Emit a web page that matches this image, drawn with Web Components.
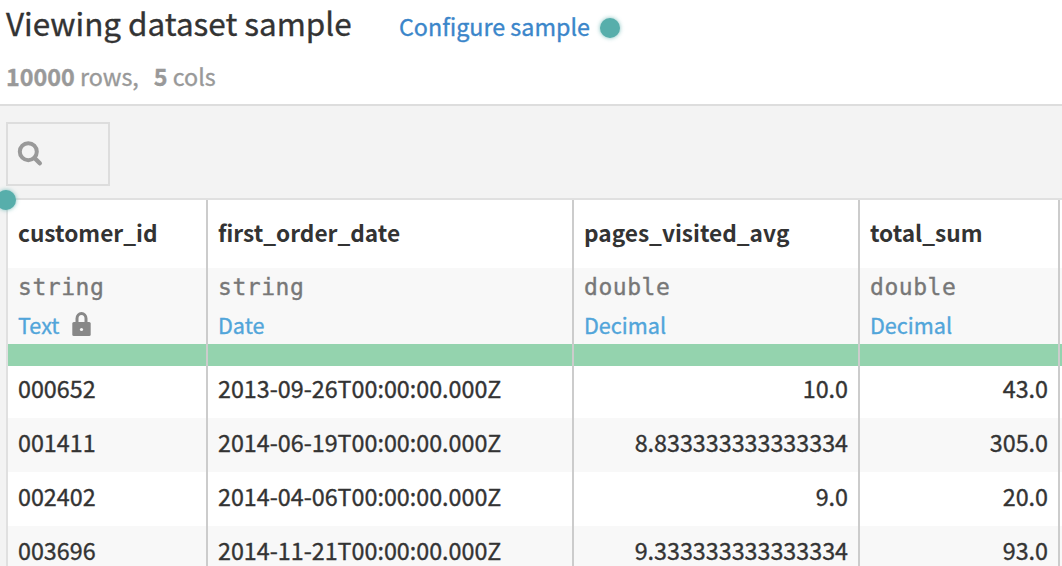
<!DOCTYPE html>
<html lang="en">
<head>
<meta charset="utf-8">
<title>Dataset sample</title>
<style>
html, body { margin: 0; height: 100%; overflow: hidden; background: #f3f3f3; }
body { font-family: "Noto Sans CJK SC", "Noto Sans", sans-serif; font-size: 23.3px; color: #333; -webkit-text-stroke: .35px; }
</style>
</head>
<body>
<sample-explorer></sample-explorer>
<script>
function define(name, html, setup) {
  const tpl = document.createElement('template');
  tpl.innerHTML = html;
  customElements.define(name, class extends HTMLElement {
    constructor() {
      super();
      this.attachShadow({ mode: 'open' }).append(tpl.content.cloneNode(true));
    }
    connectedCallback() { if (setup) setup(this, this.shadowRoot); }
  });
}

define('hint-dot', `
<style>:host { display: block; flex: none; width: 20px; height: 20px; border-radius: 50%; background: #57aeab; box-shadow: 0 0 4px rgba(87,174,171,.8); }</style>`);

define('sample-header', `
<style>
:host { display: block; box-sizing: border-box; height: 106px; padding: 0 6px; background: #fff; border-bottom: 2px solid #ddd; }
.top { display: flex; height: 56px; align-items: flex-start; }
h1 { margin: 0; width: 393px; font-size: 31.45px; font-weight: 400; line-height: 45px; white-space: nowrap; }
a { color: #3b86ca; line-height: 52px; width: 201px; font-size: 23.3px; white-space: nowrap; }
hint-dot { margin-top: 18px; }
.counts { display: flex; color: #999; font-size: 23.3px; line-height: 41px; white-space: pre; }
.counts span + span { margin-left: 15px; }
</style>
<div class="top"><h1>Viewing dataset sample</h1><a>Configure sample</a><hint-dot></hint-dot></div>
<div class="counts"><span><b>10000</b> rows,</span><span><b>5</b> cols</span></div>`);

define('search-box', `
<style>
:host { display: flex; align-items: center; box-sizing: border-box; width: 104px; height: 64px; padding-left: 9px; border: 2px solid #ddd; }
svg { display: block; }
</style>
<svg width="28" height="28" viewBox="0 0 28 28" fill="none" stroke="#999" stroke-width="4"><circle cx="11.3" cy="11.7" r="8.5"/><path d="M17.5 18l5.3 5.3" stroke-width="4.4" stroke-linecap="round"/></svg>`);

define('lock-icon', `
<style>:host { display: block; } svg { display: block; }</style>
<svg width="20" height="26" viewBox="0 0 20 26"><path d="M5 12V7.5a4.5 5 0 0 1 9 0V12" fill="none" stroke="#888" stroke-width="3"/><rect x=".3" y="11" width="18.4" height="14" rx="1.5" fill="#888"/><circle cx="9.5" cy="18.5" r="1.6" fill="#f8f8f8"/></svg>`);

define('data-column', `
<style>
:host { display: block; box-sizing: border-box; background: #fff; border-right: 2px solid #ccc; white-space: nowrap; }
.name { box-sizing: border-box; height: 68px; padding-left: 10px; font-weight: 600; font-size: 22.65px; line-height: 66px; -webkit-text-stroke: 0; }
.meta { box-sizing: border-box; height: 76px; padding-left: 10px; background: #f8f8f8; }
.storage { height: 38px; line-height: 39px; font-family: "DejaVu Sans Mono", monospace; font-size: 23px; letter-spacing: .55px; color: #777; }
.meaning { display: flex; gap: 13px; height: 38px; line-height: 37px; font-size: 21.6px; color: #51a5da; }
lock-icon { margin-top: 5px; }
.quality { height: 22px; background: #94d3ae; }
</style>
<div class="name"></div>
<div class="meta"><div class="storage"></div><div class="meaning"><span></span></div></div>
<div class="quality"></div>
<slot></slot>`, (el, root) => {
  root.querySelector('.name').textContent = el.getAttribute('name');
  root.querySelector('.storage').textContent = el.getAttribute('storage');
  root.querySelector('.meaning span').textContent = el.getAttribute('meaning');
  if (el.hasAttribute('locked')) root.querySelector('.meaning').append(document.createElement('lock-icon'));
});

define('data-cell', `
<style>
:host { display: block; box-sizing: border-box; height: 54px; padding: 0 10px; line-height: 48px; background: #fff; }
:host(:nth-child(even)) { background: #f8f8f8; }
:host(:first-child) { height: 52px; line-height: 44px; }
:host([number]) { text-align: right; }
</style>
<slot></slot>`);

define('data-grid', `
<style>
:host { display: grid; position: relative; box-sizing: border-box; grid-template-columns: 200px 366px 286px 200px 200px; margin: 12px 0 0 6px; border-top: 2px solid #e0e0e0; border-left: 2px solid #e0e0e0; }
hint-dot { position: absolute; left: -12px; top: -10px; }
</style>
<slot></slot><hint-dot></hint-dot>`);

define('sample-explorer', `
<style>
:host { display: block; height: 566px; overflow: hidden; }
search-box { margin: 16px 0 0 6px; }
</style>
<sample-header></sample-header>
<search-box></search-box>
<data-grid>
<data-column name="customer_id" storage="string" meaning="Text" locked><data-cell>000652</data-cell><data-cell>001411</data-cell><data-cell>002402</data-cell><data-cell>003696</data-cell></data-column>
<data-column name="first_order_date" storage="string" meaning="Date"><data-cell>2013-09-26T00:00:00.000Z</data-cell><data-cell>2014-06-19T00:00:00.000Z</data-cell><data-cell>2014-04-06T00:00:00.000Z</data-cell><data-cell>2014-11-21T00:00:00.000Z</data-cell></data-column>
<data-column name="pages_visited_avg" storage="double" meaning="Decimal"><data-cell number>10.0</data-cell><data-cell number>8.833333333333334</data-cell><data-cell number>9.0</data-cell><data-cell number>9.333333333333334</data-cell></data-column>
<data-column name="total_sum" storage="double" meaning="Decimal"><data-cell number>43.0</data-cell><data-cell number>305.0</data-cell><data-cell number>20.0</data-cell><data-cell number>93.0</data-cell></data-column>
<data-column name="" storage="" meaning=""><data-cell></data-cell><data-cell></data-cell><data-cell></data-cell><data-cell></data-cell></data-column>
</data-grid>`);
</script>
</body>
</html>
